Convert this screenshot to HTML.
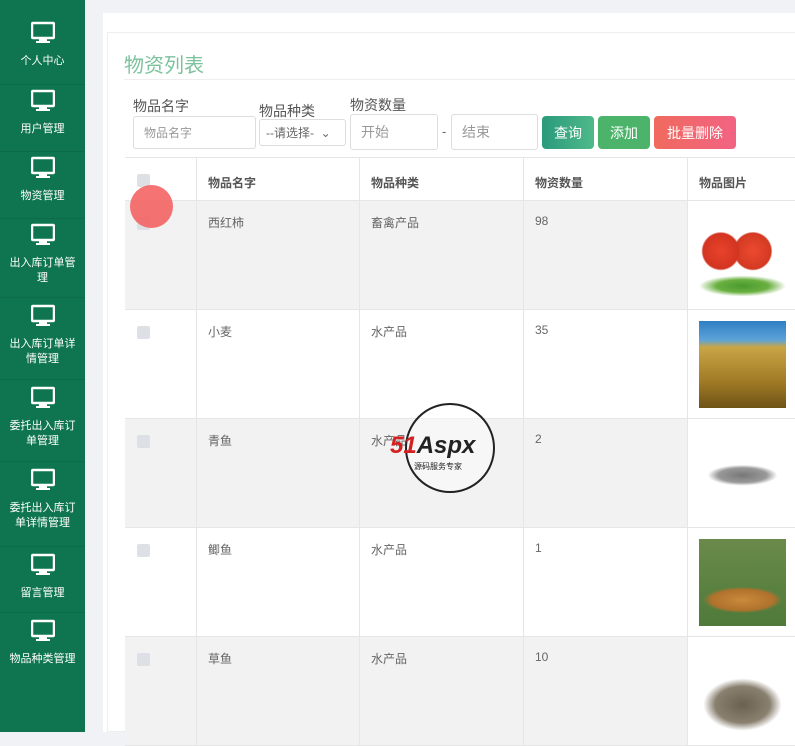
<!DOCTYPE html>
<html><head><meta charset="utf-8"><style>
*{margin:0;padding:0;box-sizing:border-box}
body{width:795px;height:732px;overflow:hidden;background:#f0f2f5;font-family:"Liberation Sans","Noto Sans CJK SC",sans-serif;position:relative}
.sb{position:absolute;left:0;top:0;width:85px;height:732px;background:#0e7550}
.it{position:absolute;left:0;width:85px;text-align:center;color:#fff;font-size:11px;line-height:15px;border-bottom:1px solid #0c6c49}
.it svg{display:block;margin:0 auto 9px}
.a{position:absolute}
.card{position:absolute;left:103px;top:13px;width:700px;height:719px;background:#fff}
.panel{position:absolute;left:107px;top:32px;width:700px;height:700px;background:#fff;border:1px solid #eee}
.lbl{position:absolute;font-size:13px;color:#555}
.inp{position:absolute;border:1px solid #ddd;border-radius:3px;background:#fff;font-size:13px;color:#999;padding-left:10px;display:flex;align-items:center}
.btn{position:absolute;top:116px;height:33px;border-radius:4px;color:#fff;font-size:14px;display:flex;align-items:center;justify-content:center}
.row{position:absolute;left:125px;width:670px;border-bottom:1px solid #e6e6e6}
.c{position:absolute;top:0;bottom:0;border-left:1px solid #e6e6e6;font-size:12px;color:#666;padding:13px 0 0 11px}
.cb{position:absolute;left:12px;top:16px;width:13px;height:13px;border-radius:2px;background:#dde1e6}
.img{position:absolute;left:11px;top:11px;width:87px;height:87px}
</style></head><body>
<div class="sb">
<div class="it" style="top:0;height:85px;padding-top:21px"><svg width="24" height="24" viewBox="0 0 24 24"><rect x="1" y="2" width="22" height="15" rx="1" fill="none" stroke="#fff" stroke-width="2.5"/><rect x="8" y="18" width="8" height="2" fill="#fff"/><rect x="5" y="20" width="14" height="2" fill="#fff"/></svg>个人中心</div>
<div class="it" style="top:85px;height:67px;padding-top:4px"><svg width="24" height="24" viewBox="0 0 24 24"><rect x="1" y="2" width="22" height="15" rx="1" fill="none" stroke="#fff" stroke-width="2.5"/><rect x="8" y="18" width="8" height="2" fill="#fff"/><rect x="5" y="20" width="14" height="2" fill="#fff"/></svg>用户管理</div>
<div class="it" style="top:152px;height:67px;padding-top:4px"><svg width="24" height="24" viewBox="0 0 24 24"><rect x="1" y="2" width="22" height="15" rx="1" fill="none" stroke="#fff" stroke-width="2.5"/><rect x="8" y="18" width="8" height="2" fill="#fff"/><rect x="5" y="20" width="14" height="2" fill="#fff"/></svg>物资管理</div>
<div class="it" style="top:219px;height:79px;padding-top:4px"><svg width="24" height="24" viewBox="0 0 24 24"><rect x="1" y="2" width="22" height="15" rx="1" fill="none" stroke="#fff" stroke-width="2.5"/><rect x="8" y="18" width="8" height="2" fill="#fff"/><rect x="5" y="20" width="14" height="2" fill="#fff"/></svg>出入库订单管<br>理</div>
<div class="it" style="top:298px;height:82px;padding-top:6px"><svg width="24" height="24" viewBox="0 0 24 24"><rect x="1" y="2" width="22" height="15" rx="1" fill="none" stroke="#fff" stroke-width="2.5"/><rect x="8" y="18" width="8" height="2" fill="#fff"/><rect x="5" y="20" width="14" height="2" fill="#fff"/></svg>出入库订单详<br>情管理</div>
<div class="it" style="top:380px;height:82px;padding-top:6px"><svg width="24" height="24" viewBox="0 0 24 24"><rect x="1" y="2" width="22" height="15" rx="1" fill="none" stroke="#fff" stroke-width="2.5"/><rect x="8" y="18" width="8" height="2" fill="#fff"/><rect x="5" y="20" width="14" height="2" fill="#fff"/></svg>委托出入库订<br>单管理</div>
<div class="it" style="top:462px;height:85px;padding-top:6px"><svg width="24" height="24" viewBox="0 0 24 24"><rect x="1" y="2" width="22" height="15" rx="1" fill="none" stroke="#fff" stroke-width="2.5"/><rect x="8" y="18" width="8" height="2" fill="#fff"/><rect x="5" y="20" width="14" height="2" fill="#fff"/></svg>委托出入库订<br>单详情管理</div>
<div class="it" style="top:547px;height:66px;padding-top:6px"><svg width="24" height="24" viewBox="0 0 24 24"><rect x="1" y="2" width="22" height="15" rx="1" fill="none" stroke="#fff" stroke-width="2.5"/><rect x="8" y="18" width="8" height="2" fill="#fff"/><rect x="5" y="20" width="14" height="2" fill="#fff"/></svg>留言管理</div>
<div class="it" style="top:613px;height:67px;padding-top:6px;border:0"><svg width="24" height="24" viewBox="0 0 24 24"><rect x="1" y="2" width="22" height="15" rx="1" fill="none" stroke="#fff" stroke-width="2.5"/><rect x="8" y="18" width="8" height="2" fill="#fff"/><rect x="5" y="20" width="14" height="2" fill="#fff"/></svg>物品种类管理</div>
</div>
<div class="card"></div>
<div class="panel"></div>
<div class="a" style="left:124px;top:49px;font-size:20px;color:#7cc29c">物资列表</div>
<div class="a" style="left:124px;top:79px;width:671px;border-top:1px solid #eee"></div>
<div class="lbl" style="left:133px;top:96px;font-size:14px">物品名字</div>
<div class="lbl" style="left:259px;top:101px;font-size:14px">物品种类</div>
<div class="lbl" style="left:350px;top:95px;font-size:14px">物资数量</div>
<div class="inp" style="left:133px;top:116px;width:123px;height:33px;font-size:12px">物品名字</div>
<div class="inp" style="left:259px;top:119px;width:87px;height:27px;font-size:12px;color:#666;padding-left:6px">--请选择-&nbsp;&nbsp;⌄</div>
<div class="inp" style="left:350px;top:114px;width:88px;height:36px;font-size:14px">开始</div>
<div class="a" style="left:442px;top:124px;font-size:13px;color:#666">-</div>
<div class="inp" style="left:451px;top:114px;width:87px;height:36px;font-size:14px">结束</div>
<div class="btn" style="left:542px;width:52px;background:linear-gradient(90deg,#2a9a7c,#4fb98a)">查询</div>
<div class="btn" style="left:598px;width:52px;background:#4cb46a">添加</div>
<div class="btn" style="left:654px;width:82px;background:linear-gradient(90deg,#f06a5e,#f26383)">批量删除</div>

<div class="row" style="top:157px;height:44px;border-top:1px solid #e6e6e6;background:#fff">
<div class="c" style="left:0;border:0"><div class="cb"></div></div>
<div class="c" style="left:71px;font-weight:bold;color:#555;padding-top:16px">物品名字</div>
<div class="c" style="left:234px;font-weight:bold;color:#555;padding-top:16px">物品种类</div>
<div class="c" style="left:398px;font-weight:bold;color:#555;padding-top:16px">物资数量</div>
<div class="c" style="left:562px;font-weight:bold;color:#555;padding-top:16px">物品图片</div>
</div>

<div class="row" style="top:201px;height:109px;background:#f2f2f2">
<div class="c" style="left:0;border:0"><div class="cb"></div></div>
<div class="c" style="left:71px">西红柿</div><div class="c" style="left:234px">畜禽产品</div><div class="c" style="left:398px">98</div>
<div class="c" style="left:562px;right:0;background:#fff"><div class="img" style="background:radial-gradient(circle at 25% 45%,#e8432c 0,#d33420 22%,transparent 24%),radial-gradient(circle at 62% 45%,#ec4a30 0,#d33a22 25%,transparent 27%),radial-gradient(ellipse 50% 12% at 50% 85%,#4a9a30 0,#6ab040 60%,transparent 100%),#fff"></div></div>
</div>
<div class="row" style="top:310px;height:109px;background:#fff">
<div class="c" style="left:0;border:0"><div class="cb"></div></div>
<div class="c" style="left:71px">小麦</div><div class="c" style="left:234px">水产品</div><div class="c" style="left:398px">35</div>
<div class="c" style="left:562px;right:0"><div class="img" style="background:linear-gradient(180deg,#2f7fc4 0,#5da3d8 22%,#c9a546 30%,#a07a25 70%,#6e5318 100%)"></div></div>
</div>
<div class="row" style="top:419px;height:109px;background:#f2f2f2">
<div class="c" style="left:0;border:0"><div class="cb"></div></div>
<div class="c" style="left:71px">青鱼</div><div class="c" style="left:234px">水产品</div><div class="c" style="left:398px">2</div>
<div class="c" style="left:562px;right:0;background:#fff"><div class="img" style="background:radial-gradient(ellipse 40% 12% at 50% 52%,#777 0,#999 70%,#fff 100%)"></div></div>
</div>
<div class="row" style="top:528px;height:109px;background:#fff">
<div class="c" style="left:0;border:0"><div class="cb"></div></div>
<div class="c" style="left:71px">鲫鱼</div><div class="c" style="left:234px">水产品</div><div class="c" style="left:398px">1</div>
<div class="c" style="left:562px;right:0"><div class="img" style="background:radial-gradient(ellipse 45% 15% at 50% 70%,#c98a3c 0,#b0722c 80%,transparent 100%),linear-gradient(180deg,#6a8a4a,#4f7a3a)"></div></div>
</div>
<div class="row" style="top:637px;height:109px;background:#f2f2f2">
<div class="c" style="left:0;border:0"><div class="cb"></div></div>
<div class="c" style="left:71px">草鱼</div><div class="c" style="left:234px">水产品</div><div class="c" style="left:398px">10</div>
<div class="c" style="left:562px;right:0;background:#fff"><div class="img" style="background:radial-gradient(ellipse 45% 30% at 50% 65%,#6b6150 0,#8a8070 70%,#fff 100%)"></div></div>
</div>

<div class="a" style="left:130px;top:185px;width:43px;height:43px;border-radius:50%;background:rgba(244,90,90,.85)"></div>
<div class="a" style="left:405px;top:403px;width:90px;height:90px;border-radius:50%;border:2px solid #222;background:rgba(255,255,255,.4)"></div>
<div class="a" style="left:390px;top:432px;font-size:24px;font-weight:bold;font-style:italic;color:#d42020">51<span style="color:#222">Aspx</span></div>
<div class="a" style="left:414px;top:461px;font-size:8px;color:#222">源码服务专家</div>
</body></html>
